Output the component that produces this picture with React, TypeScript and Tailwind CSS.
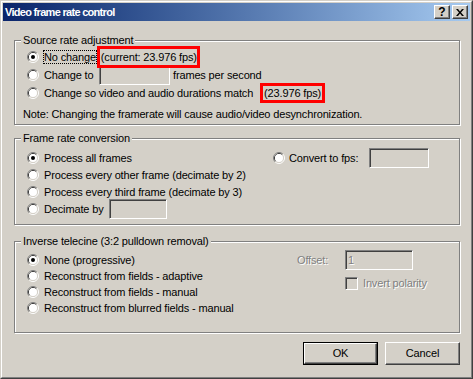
import type { ReactNode } from 'react';

function Radio({ checked }: { checked?: boolean }) {
  return (
    <svg width="12" height="12" viewBox="0 0 12 12" className="shrink-0">
      <path d="M2.11 9.89A5.5 5.5 0 0 1 9.89 2.11" stroke="#808080" fill="none" />
      <path d="M9.89 2.11A5.5 5.5 0 0 1 2.11 9.89" stroke="#ffffff" fill="none" />
      <path d="M2.82 9.18A4.5 4.5 0 0 1 9.18 2.82" stroke="#404040" fill="none" />
      <path d="M9.18 2.82A4.5 4.5 0 0 1 2.82 9.18" stroke="#d4d0c8" fill="none" />
      <circle cx="6" cy="6" r="4" fill="#ffffff" />
      {checked && <circle cx="6" cy="6" r="2" fill="#000000" />}
    </svg>
  );
}

function Edit({ className = '', children }: { className?: string; children?: ReactNode }) {
  return (
    <div
      className={`shrink-0 flex items-center bg-[#d4d0c8] border border-t-[#808080] border-l-[#808080] border-r-white border-b-white shadow-[inset_1px_1px_0_#404040,inset_-1px_-1px_0_#d4d0c8] ${className}`}
    >
      {children}
    </div>
  );
}

function Group({ title, className = '', children }: { title: string; className?: string; children: ReactNode }) {
  return (
    <fieldset className={`border border-[#808080] shadow-[inset_1px_1px_0_#fff,1px_1px_0_#fff] ${className}`}>
      <legend className="ml-[6px] px-[2px] leading-[13px] bg-[#d4d0c8]">{title}</legend>
      {children}
    </fieldset>
  );
}

function Option({ checked, children, className = '' }: { checked?: boolean; children: ReactNode; className?: string }) {
  return (
    <div className={`flex items-center ${className}`}>
      <Radio checked={checked} />
      <span className="ml-[4px] border border-transparent leading-[12px]">{children}</span>
    </div>
  );
}

const disabled = 'text-[#808080] [text-shadow:1px_1px_0_#fff]';

export default function App() {
  return (
    <div className="w-[473px] h-[379px] border border-t-[#d4d0c8] border-l-[#d4d0c8] border-r-[#404040] border-b-[#404040] bg-[#d4d0c8] text-[11px] tracking-[-0.15px] text-black [font-family:'Liberation_Sans',Arial,sans-serif]">
      <div className="h-full border border-t-white border-l-white border-r-[#808080] border-b-[#808080] p-[1px] flex flex-col">
        {/* Title bar */}
        <div className="h-[18px] flex items-center pl-[2px] pr-[2px] bg-gradient-to-r from-[#0a246a] to-[#a6caf0]">
          <span className="flex-1 font-bold text-white leading-[13px] tracking-[-0.7px]">Video frame rate control</span>
          <div className="flex gap-[2px]">
            <CaptionButton>
              <span className="font-bold text-[12px] leading-none tracking-normal">?</span>
            </CaptionButton>
            <CaptionButton>
              <svg width="8" height="7" viewBox="0 0 8 7">
                <path d="M0 0h2l2 2.5L6 0h2L5 3.5 8 7H6L4 4.5 2 7H0l3-3.5z" fill="#000" />
              </svg>
            </CaptionButton>
          </div>
        </div>

        <div className="pl-[11px] pr-[10px] pt-[13px] flex flex-col">
          {/* Source rate adjustment */}
          <Group title="Source rate adjustment">
            <div className="pl-[8px] pt-[1px] pb-[1px] flex flex-col">
              <div className="ml-[4px] flex flex-col">
                <div className="h-[18px] flex items-center">
                  <Radio checked />
                  <span className="ml-[4px] border border-dotted border-black leading-[12px]">No change</span>
                  <span className="relative z-10 border-[3px] border-[#ff0000] leading-[14px] pl-[1px] py-[1px]">
                    (current: 23.976 fps)
                  </span>
                </div>
                <div className="h-[18px] flex items-center">
                  <Radio />
                  <span className="ml-[4px] w-[56px] border border-transparent leading-[12px]">Change to</span>
                  <Edit className="w-[71px] h-[20px]" />
                  <span className="ml-[3px]">frames per second</span>
                </div>
                <div className="h-[18px] flex items-center">
                  <Radio />
                  <span className="ml-[4px] border border-transparent leading-[12px]">
                    Change so video and audio durations match
                  </span>
                  <span className="ml-[6px] border-[3px] border-[#ff0000] leading-[12px] px-[1px] py-[1px]">
                    (23.976 fps)
                  </span>
                </div>
              </div>
              <div className="mt-[3px] h-[18px] flex items-center">
                Note: Changing the framerate will cause audio/video desynchronization.
              </div>
            </div>
          </Group>

          {/* Frame rate conversion */}
          <Group title="Frame rate conversion" className="mt-[7px]">
            <div className="pl-[12px] pt-[4px] pb-[7px] flex">
              <div className="w-[246px] flex flex-col">
                <Option checked className="h-[17px]">Process all frames</Option>
                <Option className="h-[17px]">Process every other frame (decimate by 2)</Option>
                <Option className="h-[17px]">Process every third frame (decimate by 3)</Option>
                <div className="h-[17px] flex items-center">
                  <Radio />
                  <span className="ml-[4px] w-[66px] border border-transparent leading-[12px]">Decimate by</span>
                  <Edit className="w-[58px] h-[20px]" />
                </div>
              </div>
              <div className="h-[17px] flex items-center">
                <Radio />
                <span className="ml-[3px] w-[81px] border border-transparent leading-[12px]">Convert to fps:</span>
                <Edit className="w-[60px] h-[20px]" />
              </div>
            </div>
          </Group>

          {/* Inverse telecine */}
          <Group title="Inverse telecine (3:2 pulldown removal)" className="mt-[10px]">
            <div className="pl-[12px] pt-[4px] pb-[16px] flex">
              <div className="w-[270px] flex flex-col">
                <Option checked className="h-[16px]">None (progressive)</Option>
                <Option className="h-[16px]">Reconstruct from fields - adaptive</Option>
                <Option className="h-[16px]">Reconstruct from fields - manual</Option>
                <Option className="h-[16px]">Reconstruct from blurred fields - manual</Option>
              </div>
              <div className="flex flex-col">
                <div className="h-[16px] flex items-center">
                  <span className={`w-[48px] ${disabled}`}>Offset:</span>
                  <Edit className="w-[68px] h-[20px] pl-[2px]">
                    <span className={disabled}>1</span>
                  </Edit>
                </div>
                <div className="mt-[7px] h-[16px] flex items-center">
                  <div className="ml-[48px] w-[13px] h-[13px] bg-[#d4d0c8] border border-t-[#808080] border-l-[#808080] border-r-white border-b-white shadow-[inset_1px_1px_0_#404040,inset_-1px_-1px_0_#d4d0c8]" />
                  <span className={`ml-[5px] ${disabled}`}>Invert polarity</span>
                </div>
              </div>
            </div>
          </Group>

          {/* Buttons */}
          <div className="mt-[9px] flex justify-end gap-[7px]">
            <div className="w-[75px] h-[23px] border border-black">
              <div className="h-full flex items-center justify-center border border-t-white border-l-white border-r-[#404040] border-b-[#404040] shadow-[inset_-1px_-1px_0_#808080]">
                OK
              </div>
            </div>
            <div className="w-[75px] h-[23px] flex items-center justify-center border border-t-white border-l-white border-r-[#404040] border-b-[#404040] shadow-[inset_-1px_-1px_0_#808080]">
              Cancel
            </div>
          </div>
        </div>
      </div>
    </div>
  );
}

function CaptionButton({ children }: { children: ReactNode }) {
  return (
    <div className="w-[16px] h-[14px] flex items-center justify-center bg-[#d4d0c8] border border-t-white border-l-white border-r-[#404040] border-b-[#404040] shadow-[inset_-1px_-1px_0_#808080]">
      {children}
    </div>
  );
}
